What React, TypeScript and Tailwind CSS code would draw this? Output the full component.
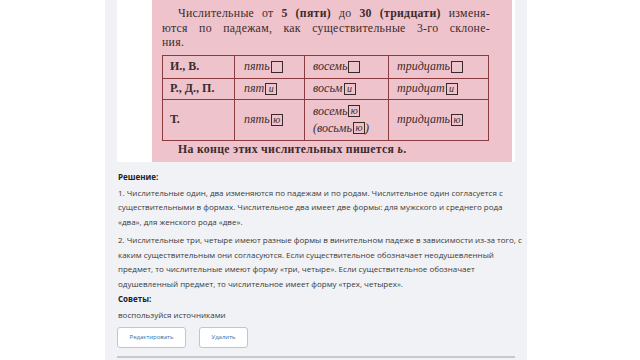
import React from 'react';

const Box = ({ ch }: { ch?: string }) => (
  <span className="inline-flex items-center justify-center w-[12px] h-[12px] border border-[#3a2a2a] align-middle text-[10px] leading-none ml-px -mt-[2px]">
    {ch ? <i>{ch}</i> : null}
  </span>
);

const Line = ({ children, last }: { children: React.ReactNode; last?: boolean }) => (
  <span className={last ? 'block whitespace-nowrap' : 'block whitespace-nowrap text-justify [text-align-last:justify]'}>
    {children}
  </span>
);

const TextbookPicture = () => (
  <div
    className="w-[360px] h-[162px] overflow-hidden bg-[#efc3cb] pl-[10px] pt-[6px] text-[#3b2b2d] text-[11.8px] leading-[14.5px]"
    style={{ fontFamily: '"Liberation Serif", "DejaVu Serif", serif' }}
  >
    <div className="w-[328px] tracking-[0.3px]">
      <Line>
        <span className="pl-[16px]">Числительные от </span>
        <b>5 (пяти)</b> до <b>30 (тридцати)</b> изменя-
      </Line>
      <Line>ются по падежам, как существительные 3-го склоне-</Line>
      <Line last>ния.</Line>
    </div>
    <table className="mt-[5px] border-collapse border-[1.5px] border-[#8a3b40] w-[327px] text-[12px]">
      <tbody>
        <tr className="h-[23px]">
          <td className="border border-[#8a3b40] w-[72px] pl-[7px] font-bold">И., В.</td>
          <td className="border border-[#8a3b40] w-[70px] pl-[9px] italic">пять<Box /></td>
          <td className="border border-[#8a3b40] w-[84px] pl-[8px] italic">восемь<Box /></td>
          <td className="border border-[#8a3b40] pl-[8px] italic">тридцать<Box /></td>
        </tr>
        <tr className="h-[21px]">
          <td className="border border-[#8a3b40] pl-[7px] font-bold">Р., Д., П.</td>
          <td className="border border-[#8a3b40] pl-[9px] italic">пят<Box ch="и" /></td>
          <td className="border border-[#8a3b40] pl-[8px] italic">восьм<Box ch="и" /></td>
          <td className="border border-[#8a3b40] pl-[8px] italic">тридцат<Box ch="и" /></td>
        </tr>
        <tr className="h-[41px]">
          <td className="border border-[#8a3b40] pl-[7px] font-bold">Т.</td>
          <td className="border border-[#8a3b40] pl-[9px] italic">пять<Box ch="ю" /></td>
          <td className="border border-[#8a3b40] pl-[8px] italic leading-[17px]">
            восемь<Box ch="ю" />
            <br />
            (восьмь<Box ch="ю" />)
          </td>
          <td className="border border-[#8a3b40] pl-[8px] italic">тридцать<Box ch="ю" /></td>
        </tr>
      </tbody>
    </table>
    <p className="mt-[1px] pl-[16px] font-bold tracking-[0.3px] whitespace-nowrap">
      На конце этих числительных пишется <i>ь</i>.
    </p>
  </div>
);

export default function App() {
  return (
    <div
      className="w-[640px] h-[360px] bg-white overflow-hidden"
      style={{ fontFamily: '"Open Sans", "Noto Sans", sans-serif' }}
    >
      <div className="ml-[105px] w-[422px] h-full bg-[#f0f2f6] px-3">
        <div className="h-[162px] bg-white pl-[35px]">
          <TextbookPicture />
        </div>
        <div className="pt-[8px] pl-px text-[8px] text-[#3a3a3a] leading-[14.5px] whitespace-nowrap">
          <p className="font-bold text-[#222]">Решение:</p>
          <p className="mt-[1px]">
            1. Числительные один, два изменяются по падежам и по родам. Числительное один согласуется с
            <br />
            существительными в формах. Числительное два имеет две формы: для мужского и среднего рода
            <br />
            «два», для женского рода «две».
          </p>
          <p className="mt-[4px]">
            2. Числительные три, четыре имеют разные формы в винительном падеже в зависимости из-за того, с
            <br />
            каким существительным они согласуются. Если существительное обозначает неодушевленный
            <br />
            предмет, то числительные имеют форму «три, четыре». Если существительное обозначает
            <br />
            одушевленный предмет, то числительное имеет форму «трех, четырех».
          </p>
          <p className="mt-[1px] font-bold text-[#222]">Советы:</p>
          <p className="mt-[1px]">воспользуйся источниками</p>
        </div>
        <div className="mt-[5px] flex gap-[13px]">
          <button className="w-[69px] h-[21px] bg-white border border-[#a8cfe0] rounded-[3px] text-[6px] text-[#2f6fa8]">
            Редактировать
          </button>
          <button className="w-[49px] h-[21px] bg-white border border-[#a8cfe0] rounded-[3px] text-[6px] text-[#2f6fa8]">
            Удалить
          </button>
        </div>
        <div className="mt-[8px] h-[2px] bg-[#c6cad0]" />
      </div>
    </div>
  );
}
